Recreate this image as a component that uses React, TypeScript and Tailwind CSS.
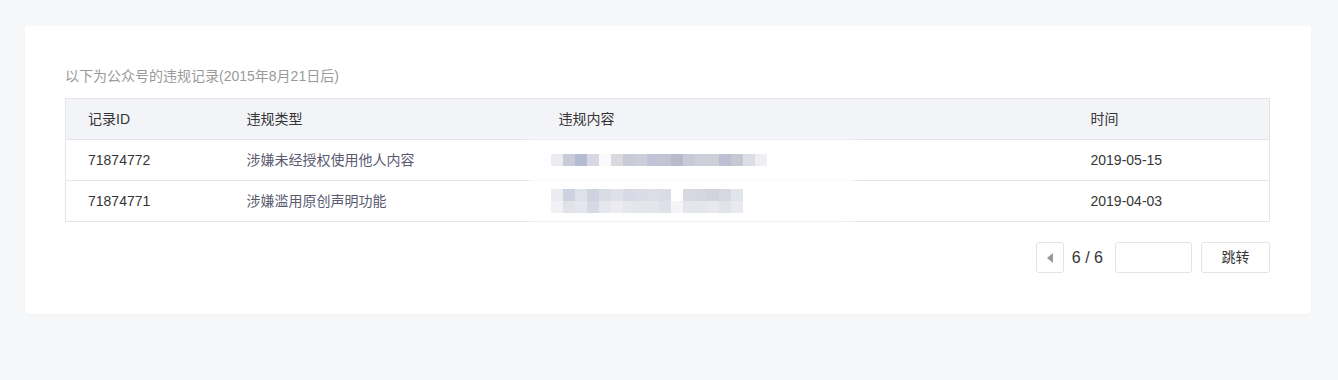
import React from 'react';

type Row = { id: string; type: string; date: string; mosaic: string[][] };

const rows: Row[] = [
  {
    id: '71874772',
    type: '涉嫌未经授权使用他人内容',
    date: '2019-05-15',
    mosaic: [
      ['#ececf0', '#c9ccd8', '#b3bcd0', '#d6d8e2', '#fafafc', '#d9dae0', '#c7cad8', '#cbcdd9', '#c1c4d6', '#c3c5d2', '#b8bac9', '#c8cad7', '#cdcfd9', '#cdcfd9', '#bcc0d2', '#c6c8d4', '#dcdde5', '#eeeef3'],
    ],
  },
  {
    id: '71874771',
    type: '涉嫌滥用原创声明功能',
    date: '2019-04-03',
    mosaic: [
      ['#ebebf0', '#cdd2e0', '#dfe1ea', '#cfd3e0', '#dadce5', '#e0e1e8', '#d7dae5', '#d9dce6', '#dcdee7', '#d9dce6', '#ffffff', '#d6d8e2', '#d5d7e0', '#d1d3dd', '#d7d9e2', '#e2e4ec'],
      ['#f1f1f5', '#e1e2ea', '#e4e6ed', '#d6d9e3', '#e6e7ed', '#ebebf0', '#e5e7ee', '#e5e6ec', '#e3e5ec', '#dfe1e9', '#f5f5f7', '#e4e6ed', '#e5e6ec', '#e8e9ee', '#e1e3ea', '#e8eaf0'],
    ],
  },
];

// pixelated content preview, 12px blocks
function Mosaic({ grid }: { grid: string[][] }) {
  return (
    <div className="relative z-10 flex flex-col">
      {grid.map((line, i) => (
        <div key={i} className="flex">
          {line.map((c, j) => (
            <div key={j} className="h-[12px] w-[12px]" style={{ backgroundColor: c }} />
          ))}
        </div>
      ))}
    </div>
  );
}

export default function App() {
  return (
    <div
      className="min-h-[380px] bg-[#f6f7f9] pl-[25px] pt-[26px] text-[14px] text-[#353535]"
      style={{ fontFamily: '"Liberation Sans", "Noto Sans CJK SC", sans-serif' }}
    >
      <div className="h-[288px] w-[1286px] rounded-[3px] bg-white pl-[40px] pr-[41px] pt-[40px] shadow-[0_1px_2px_rgba(0,0,0,0.03)]">
        <p className="mb-[12px] leading-[20px] text-[#9a9a9a]">以下为公众号的违规记录(2015年8月21日后)</p>

        <div className="relative">
          <table className="w-full table-fixed border-collapse border border-[#e4e5ea]">
            <colgroup>
              <col className="w-[159px]" />
              <col className="w-[312px]" />
              <col className="w-[532px]" />
              <col />
            </colgroup>
            <thead>
              <tr className="h-[41px] bg-[#f3f4f8] text-left">
                <th className="pl-[22px] font-normal">记录ID</th>
                <th className="pl-[22px] font-normal">违规类型</th>
                <th className="pl-[22px] font-normal">违规内容</th>
                <th className="pl-[22px] font-normal">时间</th>
              </tr>
            </thead>
            <tbody>
              {rows.map((r) => (
                <tr key={r.id} className="h-[41px] border-t border-[#e4e5ea]">
                  <td className="pl-[22px]">{r.id}</td>
                  <td className="pl-[22px] text-[#5a5a70]">{r.type}</td>
                  <td className="pl-[14px]">
                    <Mosaic grid={r.mosaic} />
                  </td>
                  <td className="pl-[22px]">{r.date}</td>
                </tr>
              ))}
            </tbody>
          </table>
          {/* soft white wash over the masked column */}
          <div className="pointer-events-none absolute left-[464px] top-[42px] h-[82px] w-[325px] bg-white/80 blur-[3px]" />
        </div>

        <div className="mt-[20px] flex items-center justify-end">
          <button className="flex h-[31px] w-[28px] items-center justify-center rounded-[3px] border border-[#e3e4e8] bg-white">
            <span className="h-0 w-0 border-y-[5px] border-r-[6px] border-y-transparent border-r-[#999]" />
          </button>
          <span className="ml-[8px] mr-[12px] text-[16px] leading-[20px] text-[#353535]">6 / 6</span>
          <input className="h-[31px] w-[77px] rounded-[3px] border border-[#e3e4e8] outline-none" />
          <button className="ml-[9px] h-[31px] w-[69px] rounded-[3px] border border-[#e3e4e8] bg-white text-[#353535]">跳转</button>
        </div>
      </div>
    </div>
  );
}
